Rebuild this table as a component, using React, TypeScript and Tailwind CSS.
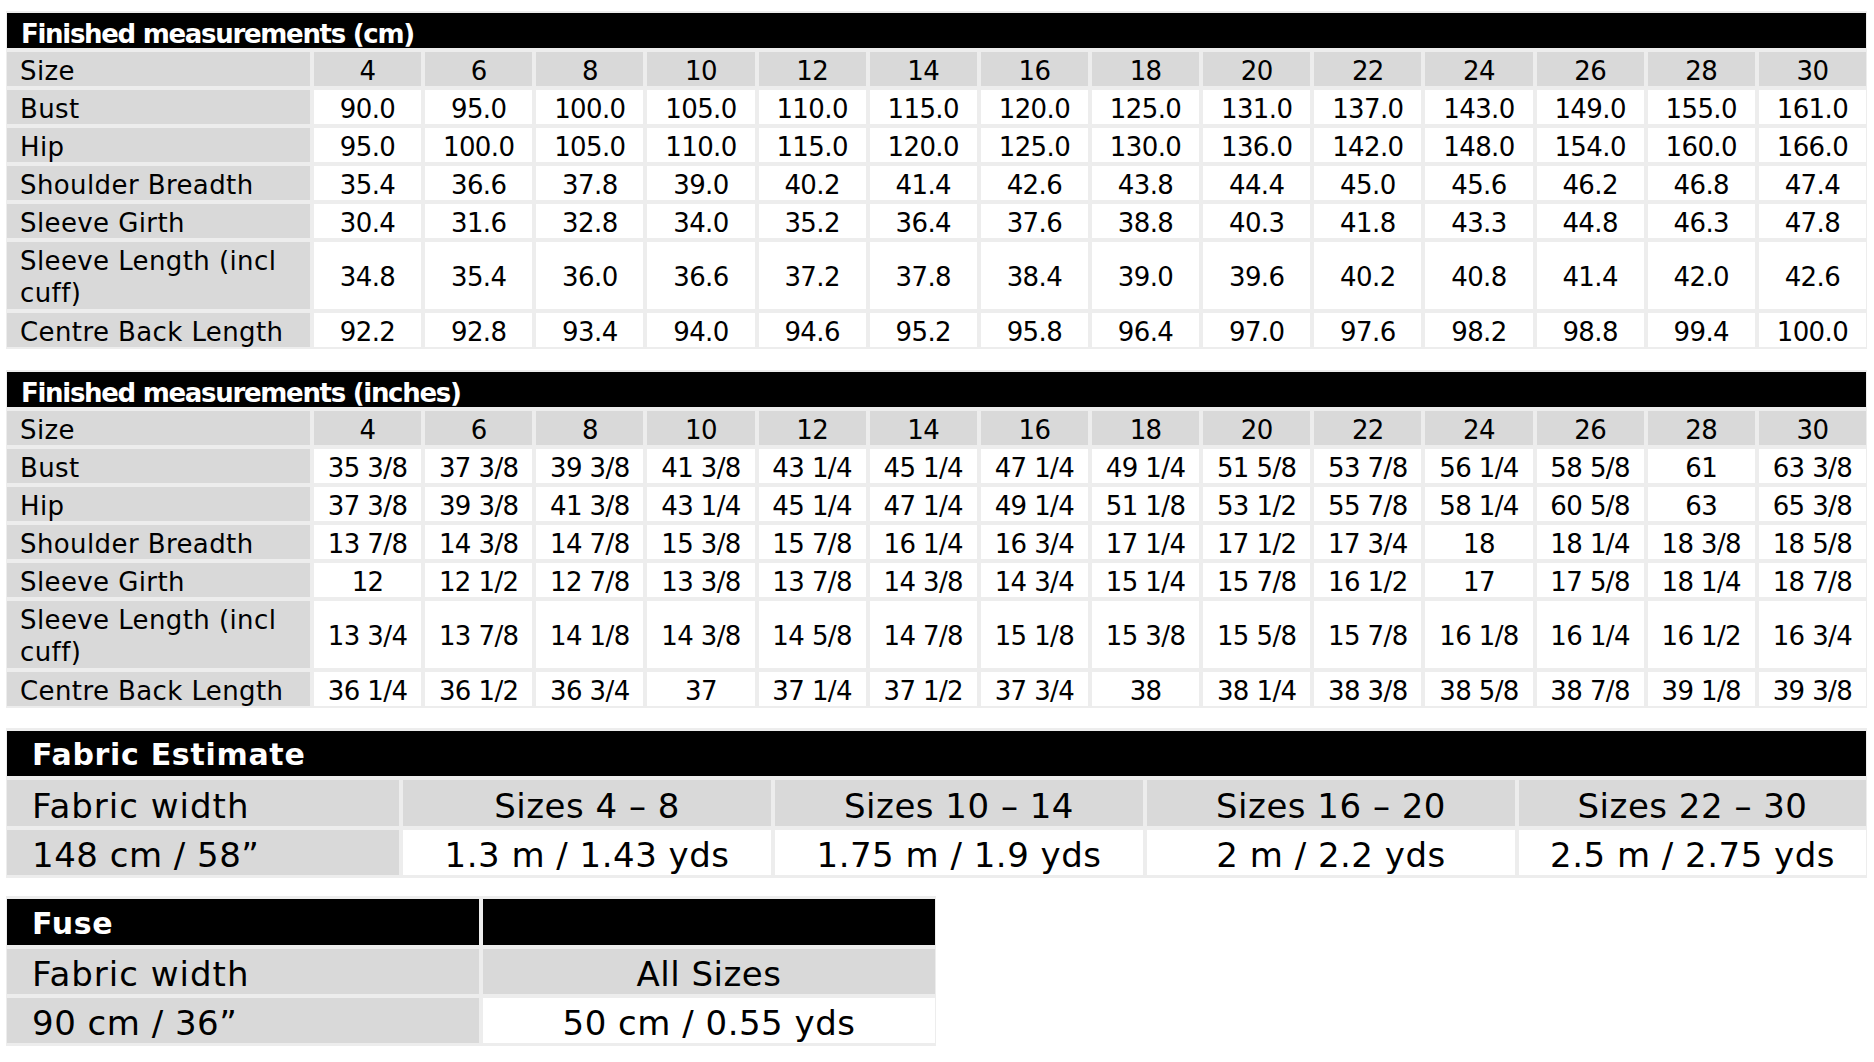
import React from "react";

const SIZES = ["4", "6", "8", "10", "12", "14", "16", "18", "20", "22", "24", "26", "28", "30"];

type Row = { label: string; values: string[]; tall?: boolean };

const CM_ROWS: Row[] = [
  { label: "Bust", values: ["90.0", "95.0", "100.0", "105.0", "110.0", "115.0", "120.0", "125.0", "131.0", "137.0", "143.0", "149.0", "155.0", "161.0"] },
  { label: "Hip", values: ["95.0", "100.0", "105.0", "110.0", "115.0", "120.0", "125.0", "130.0", "136.0", "142.0", "148.0", "154.0", "160.0", "166.0"] },
  { label: "Shoulder Breadth", values: ["35.4", "36.6", "37.8", "39.0", "40.2", "41.4", "42.6", "43.8", "44.4", "45.0", "45.6", "46.2", "46.8", "47.4"] },
  { label: "Sleeve Girth", values: ["30.4", "31.6", "32.8", "34.0", "35.2", "36.4", "37.6", "38.8", "40.3", "41.8", "43.3", "44.8", "46.3", "47.8"] },
  { label: "Sleeve Length (incl cuff)", tall: true, values: ["34.8", "35.4", "36.0", "36.6", "37.2", "37.8", "38.4", "39.0", "39.6", "40.2", "40.8", "41.4", "42.0", "42.6"] },
  { label: "Centre Back Length", values: ["92.2", "92.8", "93.4", "94.0", "94.6", "95.2", "95.8", "96.4", "97.0", "97.6", "98.2", "98.8", "99.4", "100.0"] },
];

const INCH_ROWS: Row[] = [
  { label: "Bust", values: ["35 3/8", "37 3/8", "39 3/8", "41 3/8", "43 1/4", "45 1/4", "47 1/4", "49 1/4", "51 5/8", "53 7/8", "56 1/4", "58 5/8", "61", "63 3/8"] },
  { label: "Hip", values: ["37 3/8", "39 3/8", "41 3/8", "43 1/4", "45 1/4", "47 1/4", "49 1/4", "51 1/8", "53 1/2", "55 7/8", "58 1/4", "60 5/8", "63", "65 3/8"] },
  { label: "Shoulder Breadth", values: ["13 7/8", "14 3/8", "14 7/8", "15 3/8", "15 7/8", "16 1/4", "16 3/4", "17 1/4", "17 1/2", "17 3/4", "18", "18 1/4", "18 3/8", "18 5/8"] },
  { label: "Sleeve Girth", values: ["12", "12 1/2", "12 7/8", "13 3/8", "13 7/8", "14 3/8", "14 3/4", "15 1/4", "15 7/8", "16 1/2", "17", "17 5/8", "18 1/4", "18 7/8"] },
  { label: "Sleeve Length (incl cuff)", tall: true, values: ["13 3/4", "13 7/8", "14 1/8", "14 3/8", "14 5/8", "14 7/8", "15 1/8", "15 3/8", "15 5/8", "15 7/8", "16 1/8", "16 1/4", "16 1/2", "16 3/4"] },
  { label: "Centre Back Length", values: ["36 1/4", "36 1/2", "36 3/4", "37", "37 1/4", "37 1/2", "37 3/4", "38", "38 1/4", "38 3/8", "38 5/8", "38 7/8", "39 1/8", "39 3/8"] },
];

const FABRIC_SIZES = ["Sizes 4 – 8", "Sizes 10 – 14", "Sizes 16 – 20", "Sizes 22 – 30"];
const FABRIC_AMOUNTS = ["1.3 m / 1.43 yds", "1.75 m / 1.9 yds", "2 m / 2.2 yds", "2.5 m / 2.75 yds"];

function MeasurementTable({ title, rows }: { title: string; rows: Row[] }) {
  return (
    <div className="ml-[6px] w-[1861px] bg-[#ededed] px-[1px] py-[2px]">
      <div className="grid grid-cols-[303px_repeat(14,1fr)] grid-rows-[35px_34px_34px_34px_34px_34px_67px_34px] gap-[4px]">
        {/* black title bar across the whole table */}
        <div className="col-span-15 flex items-end bg-black pb-[1px] pl-[14px] text-[26px] font-bold leading-[26px] tracking-[-1.3px] text-white whitespace-nowrap">
          {title}
        </div>

        <div className="flex items-end bg-[#d9d9d9] pb-[2px] pl-[13px] leading-[26px] tracking-[0.4px]">Size</div>
        {SIZES.map((s) => (
          <div key={s} className="flex items-end justify-center bg-[#d9d9d9] pb-[2px] leading-[26px] tracking-[-0.6px]">
            {s}
          </div>
        ))}

        {rows.map((row) => (
          <React.Fragment key={row.label}>
            {row.tall ? (
              <div className="flex items-end bg-[#d9d9d9] pl-[13px] leading-[32px] tracking-[0.4px]">
                <span>
                  Sleeve Length (incl
                  <br />
                  cuff)
                </span>
              </div>
            ) : (
              <div className="flex items-end bg-[#d9d9d9] pb-[2px] pl-[13px] leading-[26px] tracking-[0.4px] whitespace-nowrap">
                {row.label}
              </div>
            )}
            {row.values.map((v, i) => (
              <div
                key={i}
                className={`flex justify-center bg-white leading-[26px] tracking-[-0.6px] whitespace-nowrap ${
                  row.tall ? "items-center pt-[3px]" : "items-end pb-[2px]"
                }`}
              >
                {v}
              </div>
            ))}
          </React.Fragment>
        ))}
      </div>
    </div>
  );
}

export default function App() {
  return (
    <div
      className="min-h-screen bg-white pt-[11px] text-[26px] text-black"
      style={{ fontFamily: '"DejaVu Sans", "Noto Sans", sans-serif' }}
    >
      <MeasurementTable title="Finished measurements (cm)" rows={CM_ROWS} />

      <div className="mt-[21px]">
        <MeasurementTable title="Finished measurements (inches)" rows={INCH_ROWS} />
      </div>

      {/* Fabric estimate */}
      <div className="mt-[20px] ml-[6px] w-[1861px] bg-[#ededed] px-[1px] pt-[3px] pb-[3px] text-[34px] tracking-[0.5px]">
        <div className="grid grid-cols-[392px_368px_368px_368px_1fr] grid-rows-[45px_46px_45px] gap-[4px]">
          <div className="col-span-5 flex items-end bg-black pb-[6px] pl-[25px] text-[30px] font-bold leading-[30px] tracking-[0.7px] text-white">
            Fabric Estimate
          </div>

          <div className="flex items-end bg-[#d9d9d9] pb-[3px] pl-[25px] leading-[34px] tracking-[1px] whitespace-nowrap">Fabric width</div>
          {FABRIC_SIZES.map((s) => (
            <div key={s} className="flex items-end justify-center bg-[#d9d9d9] pb-[3px] leading-[34px] whitespace-nowrap">
              {s}
            </div>
          ))}

          <div className="flex items-center bg-[#d9d9d9] pt-[5px] pl-[25px] leading-[34px] whitespace-nowrap">148 cm / 58”</div>
          {FABRIC_AMOUNTS.map((a) => (
            <div key={a} className="flex items-center justify-center bg-white pt-[5px] leading-[34px] whitespace-nowrap">
              {a}
            </div>
          ))}
        </div>
      </div>

      {/* Fuse */}
      <div className="mt-[18px] ml-[6px] w-[930px] bg-[#ededed] px-[1px] pt-[3px] pb-[3px] text-[34px] tracking-[0.5px]">
        <div className="grid grid-cols-[472px_1fr] grid-rows-[46px_45px_45px] gap-[4px]">
          <div className="flex items-end bg-black pb-[6px] pl-[25px] text-[30px] font-bold leading-[30px] tracking-[0.7px] text-white">
            Fuse
          </div>
          <div className="bg-black" />

          <div className="flex items-end bg-[#d9d9d9] pb-[3px] pl-[25px] leading-[34px] tracking-[1px] whitespace-nowrap">Fabric width</div>
          <div className="flex items-end justify-center bg-[#d9d9d9] pb-[3px] leading-[34px]">All Sizes</div>

          <div className="flex items-center bg-[#d9d9d9] pt-[5px] pl-[25px] leading-[34px] whitespace-nowrap">90 cm / 36”</div>
          <div className="flex items-center justify-center bg-white pt-[5px] leading-[34px] whitespace-nowrap">50 cm / 0.55 yds</div>
        </div>
      </div>
    </div>
  );
}
